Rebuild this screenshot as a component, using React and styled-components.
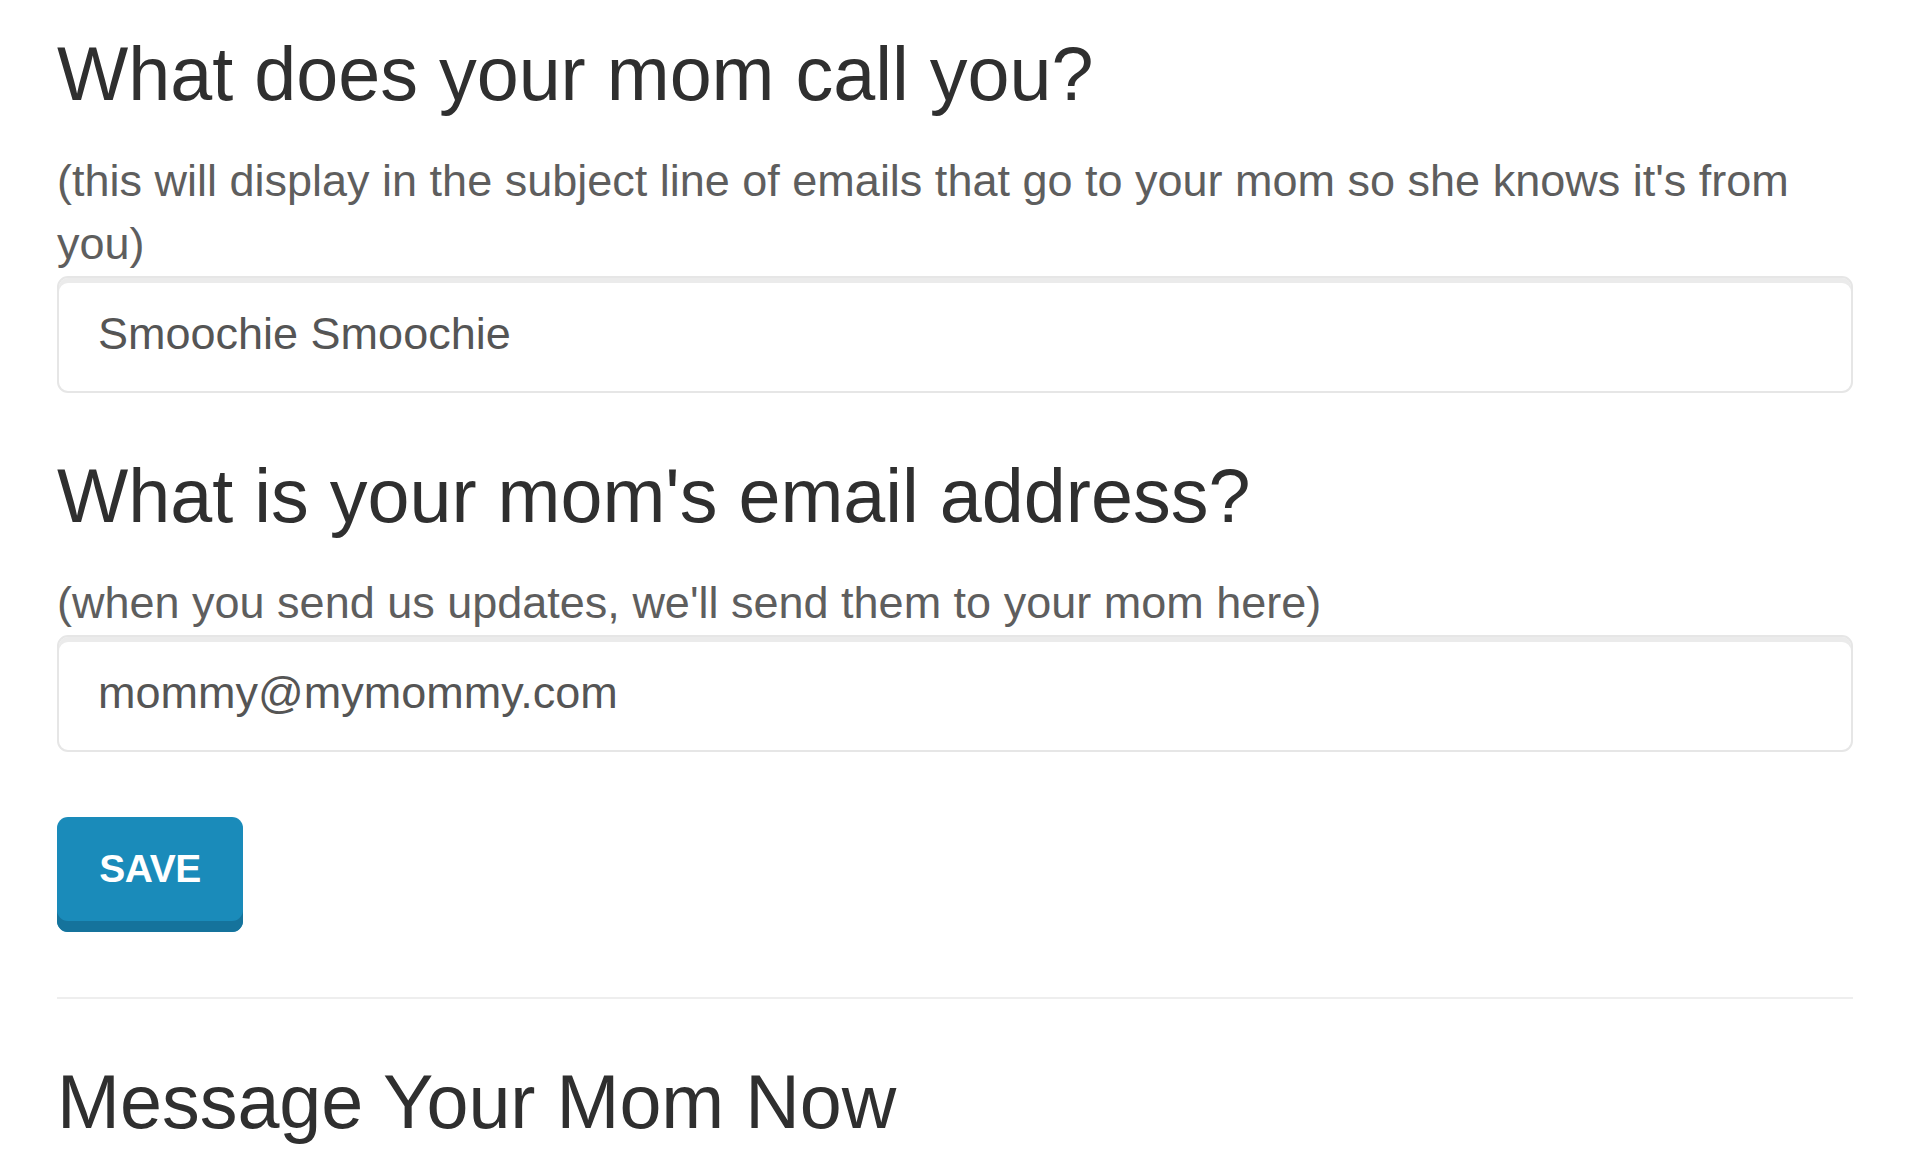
import React, { useState } from 'react'
import styled, { createGlobalStyle } from 'styled-components'

const GlobalStyle = createGlobalStyle`
  html, body {
    margin: 0;
    padding: 0;
    background: #fff;
  }
  body {
    font-family: "Liberation Sans", Arial, sans-serif;
    color: #333;
  }
`

const Page = styled.div`
  padding: 33px 67px 0 57px;
`

const Heading = styled.h2`
  font-size: 75.5px;
  font-weight: normal;
  line-height: 1.1;
  color: #2f2f2f;
  margin: 0 0 34px;
`

const Help = styled.p`
  font-size: 45px;
  line-height: 1.396;
  color: #5e5e5e;
  margin: 0;
`

const Field = styled.input`
  display: block;
  box-sizing: border-box;
  width: 100%;
  height: 117px;
  margin: 0 0 ${props => props.gap || 62}px;
  padding: 0 39px;
  font-family: "Liberation Sans", Arial, sans-serif;
  font-size: 45px;
  color: #555;
  background: #fff;
  border: 2px solid #e6e6e6;
  border-radius: 11px;
  box-shadow: inset 0 5px 0 #ebebeb;
  outline: none;
`

const SaveButton = styled.button`
  display: block;
  width: 186px;
  height: 115px;
  margin: 0 0 65px;
  padding: 0 0 10px;
  font-family: "Liberation Sans", Arial, sans-serif;
  font-size: 39px;
  font-weight: bold;
  letter-spacing: -0.5px;
  color: #fff;
  background: #1a8bba;
  border: none;
  border-radius: 11px;
  box-shadow: inset 0 -11px 0 #15739c;
  cursor: pointer;
`

const Divider = styled.hr`
  height: 2px;
  margin: 0 0 62px;
  border: none;
  background: #eeeeee;
`

function App () {
  const [nickname, setNickname] = useState('Smoochie Smoochie')
  const [email, setEmail] = useState('mommy@mymommy.com')
  return (
    <Page>
      <GlobalStyle />
      <Heading>What does your mom call you?</Heading>
      <Help>(this will display in the subject line of emails that go to your mom so she knows it's from you)</Help>
      <Field value={nickname} onChange={(e) => setNickname(e.target.value)} />
      <Heading>What is your mom's email address?</Heading>
      <Help>(when you send us updates, we'll send them to your mom here)</Help>
      <Field type='email' gap={65} value={email} onChange={(e) => setEmail(e.target.value)} />
      <SaveButton>SAVE</SaveButton>
      <Divider />
      <Heading>Message Your Mom Now</Heading>
    </Page>
  )
}

export default App
